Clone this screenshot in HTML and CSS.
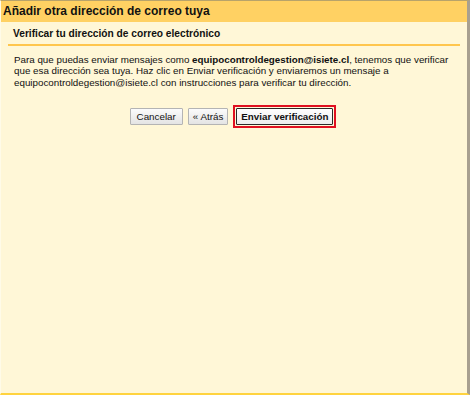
FILE: index.html
```html
<!DOCTYPE html>
<html lang="es">
<head>
<meta charset="utf-8">
<title>Añadir otra dirección de correo tuya</title>
<link rel="stylesheet" href="styles.css">
</head>
<body>
<div class="dialog">
  <div class="header">Añadir otra dirección de correo tuya</div>
  <div class="content">
    <div class="subhead">Verificar tu dirección de correo electrónico</div>
    <p class="text">Para que puedas enviar mensajes como <b>equipocontroldegestion@isiete.cl</b>, tenemos que verificar que esa dirección sea tuya. Haz clic en Enviar verificación y enviaremos un mensaje a equipocontroldegestion@isiete.cl con instrucciones para verificar tu dirección.</p>
    <div class="actions">
      <button class="btn btn-wide">Cancelar</button>
      <button class="btn">« Atrás</button>
      <span class="highlight"><button class="btn btn-primary">Enviar verificación</button></span>
    </div>
  </div>
</div>
</body>
</html>
```
FILE: styles.css
```css
html, body {
  margin: 0;
  padding: 0;
  height: 100%;
}
body {
  font-family: Arial, "Liberation Sans", sans-serif;
  color: #111;
  background: #fff7d7;
}
.dialog {
  box-sizing: border-box;
  height: 395px;
  width: 470px;
  display: flex;
  flex-direction: column;
  background: #fff7d7;
  border-top: 1px solid #b8a36a;
  border-right: 3px solid #a8a090;
  border-bottom: 2px solid #ffd33f;
  border-left: 1px solid #fffbe8;
}
.header {
  background: #ffd163;
  height: 21px;
  line-height: 21px;
  padding-left: 2px;
  font-size: 12px;
  font-weight: bold;
  color: #111;
}
.content {
  padding: 0 7px;
}
.subhead {
  font-size: 10.2px;
  font-weight: bold;
  padding: 6px 0 0 5px;
  height: 16px;
  line-height: 12px;
  border-bottom: 2px solid #ffc64d;
}
.text {
  font-size: 9.8px;
  line-height: 11.3px;
  margin: 8px 0 0 6px;
  padding-right: 4px;
}
.actions {
  display: flex;
  justify-content: center;
  align-items: center;
  gap: 5px;
  margin-top: 17px;
  padding-right: 2px;
}
.btn {
  box-sizing: border-box;
  font-family: Arial, "Liberation Sans", sans-serif;
  font-size: 9.8px;
  color: #111;
  height: 17px;
  padding: 0 4px;
  margin: 0;
  border: 1px solid #b4b4b4;
  border-radius: 1px;
  background: linear-gradient(#fbfbfb, #e4e4e4);
  line-height: 15px;
}
.btn-wide {
  padding: 0 6px;
}
.btn-primary {
  font-weight: bold;
  border: 1px solid #2a2a2a;
  padding: 0 4px;
  background: linear-gradient(#ffffff, #ececec);
}
.highlight {
  display: inline-flex;
  border: 2px solid #e01020;
  padding: 1px;
}
```
